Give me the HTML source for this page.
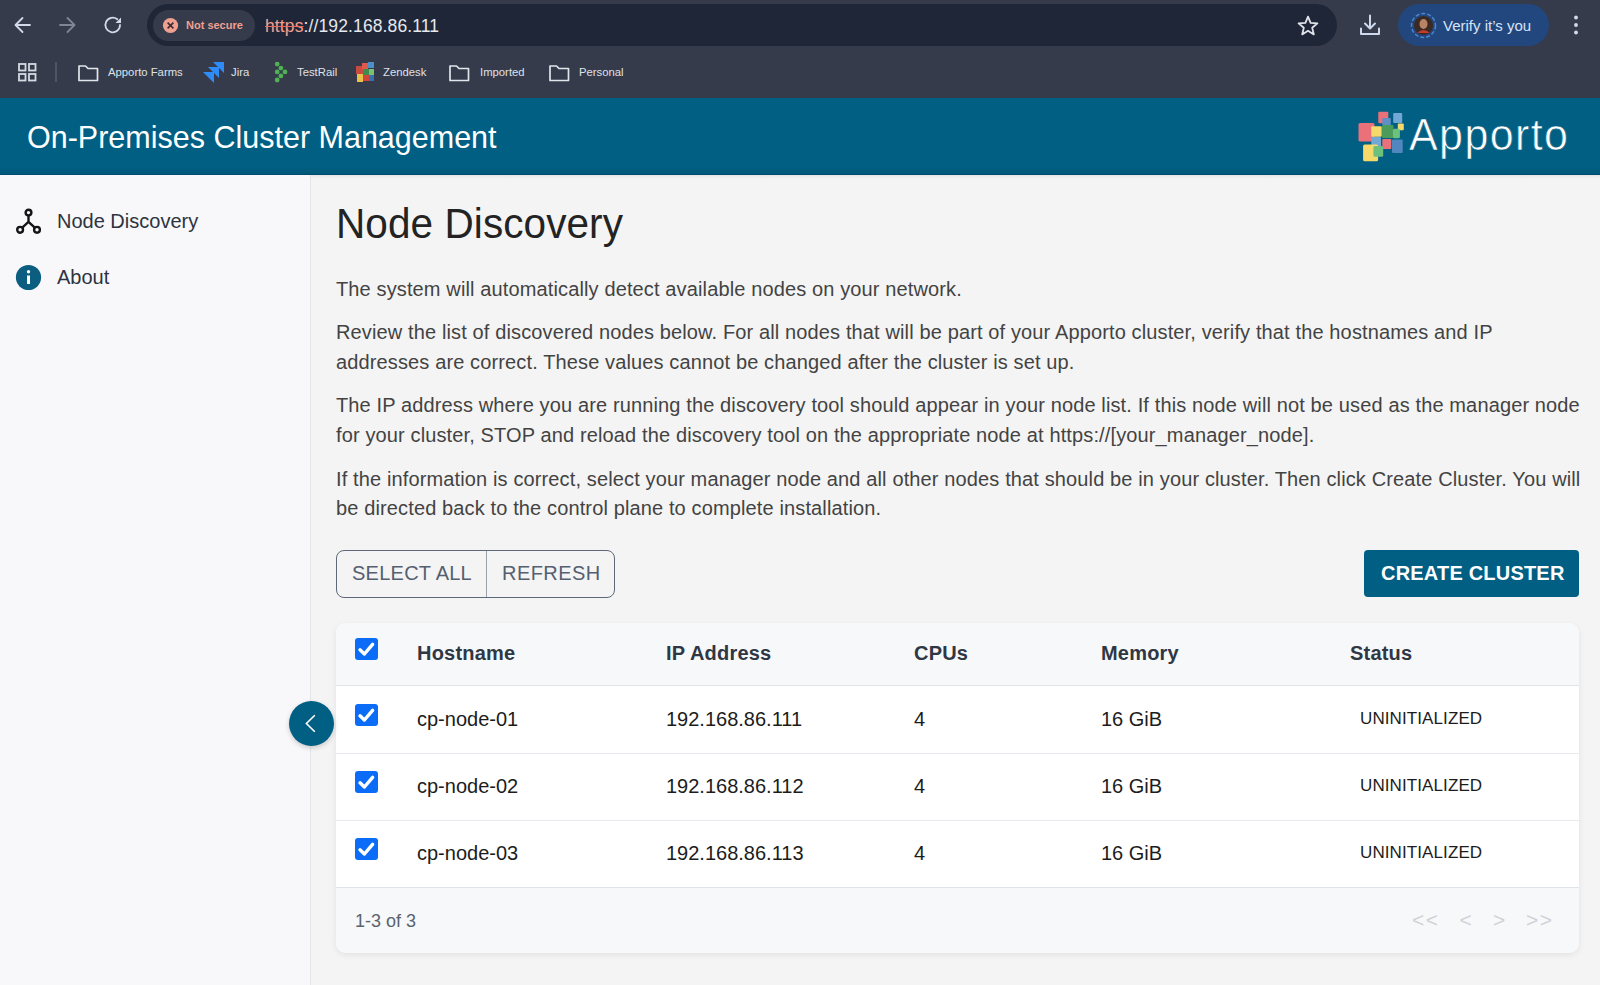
<!DOCTYPE html>
<html><head><meta charset="utf-8">
<style>
*{box-sizing:border-box;margin:0;padding:0}
html,body{width:1600px;height:985px;overflow:hidden;background:#f4f4f4;font-family:"Liberation Sans",sans-serif;position:relative}
.a{position:absolute}
.t{position:absolute;white-space:nowrap;line-height:1}
#chrome{left:0;top:0;width:1600px;height:98px;background:#353b4b}
#omni{left:147px;top:4px;width:1190px;height:42px;border-radius:21px;background:#1f2637}
#chip{left:153px;top:10px;width:102px;height:31px;border-radius:16px;background:#353b4b}
#verify{left:1398px;top:4px;width:151px;height:42px;border-radius:21px;background:#22477f}
#hdr{left:0;top:98px;width:1600px;height:77px;background:#005f83}
#side{left:0;top:175px;width:311px;height:810px;background:#f8f8fa;border-right:1px solid #e3e5ea}
.bm{position:absolute;white-space:nowrap;line-height:1;font-size:11.3px;color:#dfe2e8;top:67px}
.p{position:absolute;white-space:nowrap;line-height:1;font-size:20px;color:#434343;left:336px;letter-spacing:0.13px}
#card{left:336px;top:623px;width:1243px;height:330px;border-radius:10px;background:#fff;box-shadow:0 2px 6px rgba(0,0,0,0.075);overflow:hidden}
.th{position:absolute;white-space:nowrap;line-height:1;font-size:20px;font-weight:bold;color:#2f3744;letter-spacing:0.2px}
.td{position:absolute;white-space:nowrap;line-height:1;font-size:20px;color:#1c1c1c}
.cb{position:absolute;left:355px;width:23px;height:22px;border-radius:3px;background:#0b6cf7}
.cb svg{position:absolute;left:0;top:0}
</style></head><body>
<!-- browser chrome -->
<div id="chrome" class="a"></div>
<svg class="a" style="left:0;top:0" width="140" height="50">
  <g fill="none" stroke="#d3d9e6" stroke-width="1.8" stroke-linecap="round" stroke-linejoin="round">
    <path d="M30 25H16M22.5 18L15.5 25L22.5 32"/>
  </g>
  <g fill="none" stroke="#7d8596" stroke-width="1.8" stroke-linecap="round" stroke-linejoin="round">
    <path d="M60 25H74M67.5 18L74.5 25L67.5 32"/>
  </g>
  <g fill="none" stroke="#d3d9e6" stroke-width="1.8" stroke-linecap="round">
    <path d="M120 25A7.3 7.3 0 1 1 117.3 19.3"/>
  </g>
  <path d="M121 17.5V23H115.5Z" fill="#d3d9e6"/>
</svg>
<div id="omni" class="a"></div>
<div id="chip" class="a"></div>
<svg class="a" style="left:162px;top:17px" width="17" height="17">
  <circle cx="8.5" cy="8.5" r="7.6" fill="#f0a091"/>
  <path d="M5.6 5.6L11.4 11.4M11.4 5.6L5.6 11.4" stroke="#3a2c35" stroke-width="1.6"/>
</svg>
<div class="t" style="left:186px;top:20px;font-size:11px;font-weight:bold;color:#f0a091">Not secure</div>
<div class="t" style="left:265px;top:18px;font-size:17.5px;color:#e6e8ee;letter-spacing:0.12px"><span style="color:#f0a091;text-decoration:line-through;text-decoration-color:#e8675c">https</span>://192.168.86.111</div>
<svg class="a" style="left:1296px;top:14px" width="24" height="24">
  <path d="M12 2.6L14.6 8.9L21.4 9.4L16.2 13.8L17.8 20.4L12 16.8L6.2 20.4L7.8 13.8L2.6 9.4L9.4 8.9Z" fill="none" stroke="#e1e4ea" stroke-width="1.8" stroke-linejoin="round"/>
</svg>
<svg class="a" style="left:1358px;top:13px" width="24" height="24">
  <g fill="none" stroke="#cdd8ec" stroke-width="2" stroke-linecap="round" stroke-linejoin="round">
    <path d="M12 2.5V15M7 10.5L12 15.5L17 10.5M3 15.5V21H21V15.5"/>
  </g>
</svg>
<div id="verify" class="a"></div>
<svg class="a" style="left:1410px;top:12px" width="27" height="27">
  <circle cx="13.5" cy="13.5" r="12" fill="none" stroke="#4f86d0" stroke-width="1.5" stroke-dasharray="4 2"/>
  <circle cx="13.5" cy="13.5" r="9.5" fill="#3a2a22"/>
  <ellipse cx="13.5" cy="12" rx="4" ry="5" fill="#b98366"/>
  <path d="M7 21Q13.5 15 20 21Z" fill="#c03a2e"/>
</svg>
<div class="t" style="left:1443px;top:18px;font-size:15px;color:#d7e3f7">Verify it’s you</div>
<svg class="a" style="left:1570px;top:14px" width="12" height="24">
  <circle cx="6" cy="3.5" r="1.9" fill="#d6dbe5"/><circle cx="6" cy="11" r="1.9" fill="#d6dbe5"/><circle cx="6" cy="18.5" r="1.9" fill="#d6dbe5"/>
</svg>
<!-- bookmarks bar -->
<svg class="a" style="left:16px;top:61px" width="24" height="24">
  <g fill="none" stroke="#d6dae2" stroke-width="1.8">
    <rect x="3" y="3" width="6.5" height="6.5"/><rect x="13" y="3" width="6.5" height="6.5"/>
    <rect x="3" y="13" width="6.5" height="6.5"/><rect x="13" y="13" width="6.5" height="6.5"/>
  </g>
</svg>
<div class="a" style="left:55px;top:62px;width:2px;height:20px;background:#4d5465"></div>
<svg class="a" style="left:76px;top:62px" width="24" height="22">
  <path d="M3 4H9.5L12 6.5H21.5V18.5H3Z" fill="none" stroke="#e2e5ea" stroke-width="1.7" stroke-linejoin="round"/>
</svg>
<div class="bm" style="left:108px">Apporto Farms</div>
<svg class="a" style="left:200px;top:59px" width="27" height="27">
  <path d="M13 3H24V14L19 9Z" fill="#2f8cf6"/>
  <path d="M8 8H19V19L14 14Z" fill="#2f8cf6"/>
  <path d="M3 13H14V24L9 19Z" fill="#2f8cf6"/>
</svg>
<div class="bm" style="left:231px">Jira</div>
<svg class="a" style="left:270px;top:58px" width="20" height="28">
  <g fill="#4fb253"><circle cx="7.2" cy="6.1" r="2.4"/><circle cx="10.9" cy="10.1" r="2.4"/><circle cx="7.2" cy="13.9" r="2.4"/><circle cx="15" cy="13.9" r="2.4"/><circle cx="10.9" cy="17.9" r="2.4"/><circle cx="7.2" cy="22" r="2.4"/></g>
</svg>
<div class="bm" style="left:297px">TestRail</div>
<svg class="a" style="left:355px;top:61px" width="22" height="22">
  <rect x="1" y="5" width="7" height="8" fill="#c94a3f"/><rect x="7" y="2" width="6" height="7" fill="#e05a4c"/><rect x="13" y="1" width="6" height="6" fill="#4b90c8"/>
  <rect x="8" y="8" width="6" height="6" fill="#3d8d4c"/><rect x="14" y="8" width="5" height="6" fill="#7cc070"/><rect x="2" y="13" width="6" height="8" fill="#e9c14a"/><rect x="8" y="14" width="6" height="6" fill="#d1453b"/><rect x="14" y="14" width="5" height="6" fill="#3a6fb0"/>
</svg>
<div class="bm" style="left:383px">Zendesk</div>
<svg class="a" style="left:447px;top:62px" width="24" height="22">
  <path d="M3 4H9.5L12 6.5H21.5V18.5H3Z" fill="none" stroke="#e2e5ea" stroke-width="1.7" stroke-linejoin="round"/>
</svg>
<div class="bm" style="left:480px">Imported</div>
<svg class="a" style="left:547px;top:62px" width="24" height="22">
  <path d="M3 4H9.5L12 6.5H21.5V18.5H3Z" fill="none" stroke="#e2e5ea" stroke-width="1.7" stroke-linejoin="round"/>
</svg>
<div class="bm" style="left:579px">Personal</div>

<!-- app header -->
<div id="hdr" class="a"></div>
<div class="a" style="left:0;top:167px;width:1600px;height:7px;background:linear-gradient(#005f83,#005879)"></div>
<div class="a" style="left:0;top:174px;width:1600px;height:1px;background:#00496f"></div>
<div class="a" style="left:311px;top:175px;width:1289px;height:4px;background:linear-gradient(rgba(0,0,0,0.06),rgba(0,0,0,0))"></div>
<div class="t" style="left:27px;top:122px;font-size:30.5px;color:#fff;transform:scaleY(1.04);transform-origin:0 25px">On-Premises Cluster Management</div>
<svg class="a" style="left:1350px;top:105px" width="60" height="60">
  <g>
  <rect x="8.5" y="18" width="16" height="18.5" rx="1.5" fill="#ea717a"/>
  <rect x="28.3" y="6.7" width="10" height="11.6" rx="1" fill="#ea717a"/>
  <rect x="43.2" y="7.9" width="9" height="10" rx="1" fill="#71a8d6"/>
  <rect x="32.3" y="13.1" width="8.5" height="7.3" rx="1" fill="#5f8fc6"/>
  <rect x="47.8" y="18.6" width="6" height="6.7" rx="1" fill="#f5d96b"/>
  <rect x="21.3" y="21.3" width="10.4" height="10.4" rx="1" fill="#f5d96b"/>
  <rect x="32" y="20" width="11.5" height="12.9" rx="1" fill="#4b9b5b"/>
  <rect x="42.9" y="23.8" width="7" height="9.4" rx="1.5" fill="#6dc17e"/>
  <rect x="21.3" y="32" width="9.7" height="10" rx="1" fill="#71a8d6"/>
  <rect x="32.3" y="34.1" width="9" height="10" rx="1" fill="#ea717a"/>
  <rect x="42" y="34.4" width="10.7" height="13.7" rx="1" fill="#4f87be"/>
  <rect x="13.1" y="39.6" width="15" height="16.7" rx="1.5" fill="#f5d96b"/>
  <rect x="23.4" y="41.1" width="9.8" height="10.7" rx="1.5" fill="#6dc17e"/>
  </g>
</svg>
<div class="t" style="left:1409px;top:113.5px;font-size:43px;color:#fff;letter-spacing:1.4px;-webkit-text-stroke:0.6px #005f83;transform:scaleY(1.05);transform-origin:0 38px">Apporto</div>

<!-- sidebar -->
<div id="side" class="a"></div>
<svg class="a" style="left:14px;top:206px" width="30" height="30">
  <g fill="none" stroke="#151515" stroke-width="2.4">
    <circle cx="14.5" cy="6.6" r="2.9"/><circle cx="6.1" cy="23.8" r="2.9"/><circle cx="23" cy="23.8" r="2.9"/>
    <path d="M14.5 9.5V15.8L8.3 21.6M14.5 15.8L20.8 21.6"/>
  </g>
</svg>
<div class="t" style="left:57px;top:211px;font-size:20px;color:#2d3340">Node Discovery</div>
<svg class="a" style="left:15px;top:264px" width="27" height="27">
  <circle cx="13.5" cy="13.5" r="12.6" fill="#0b5e80"/>
  <rect x="12" y="11.5" width="3" height="8.5" fill="#fff"/>
  <circle cx="13.5" cy="7.8" r="1.7" fill="#fff"/>
</svg>
<div class="t" style="left:57px;top:267px;font-size:20px;color:#2d3340">About</div>

<!-- main -->
<div class="t" style="left:336px;top:204px;font-size:40.5px;color:#232323;letter-spacing:0.08px;transform:scaleY(1.06);transform-origin:0 33px">Node Discovery</div>
<div class="p" style="top:279px">The system will automatically detect available nodes on your network.</div>
<div class="p" style="top:322px">Review the list of discovered nodes below. For all nodes that will be part of your Apporto cluster, verify that the hostnames and IP</div>
<div class="p" style="top:352px">addresses are correct. These values cannot be changed after the cluster is set up.</div>
<div class="p" style="top:395px">The IP address where you are running the discovery tool should appear in your node list. If this node will not be used as the manager node</div>
<div class="p" style="top:425px">for your cluster, STOP and reload the discovery tool on the appropriate node at https://[your_manager_node].</div>
<div class="p" style="top:469px">If the information is correct, select your manager node and all other nodes that should be in your cluster. Then click Create Cluster. You will</div>
<div class="p" style="top:498px">be directed back to the control plane to complete installation.</div>

<!-- buttons -->
<div class="a" style="left:336px;top:550px;width:279px;height:48px;border:1px solid #5d6878;border-radius:8px"></div>
<div class="a" style="left:486px;top:551px;width:1px;height:46px;background:#9aa1aa"></div>
<div class="t" style="left:352px;top:562.5px;font-size:20px;color:#546070;letter-spacing:0.25px">SELECT ALL</div>
<div class="t" style="left:502px;top:562.5px;font-size:20px;color:#546070;letter-spacing:0.45px">REFRESH</div>
<div class="a" style="left:1364px;top:550px;width:215px;height:47px;border-radius:4px;background:#005f83"></div>
<div class="t" style="left:1381px;top:562.5px;font-size:20px;font-weight:bold;color:#fff;letter-spacing:0.2px">CREATE CLUSTER</div>

<!-- table -->
<div id="card" class="a">
  <div class="a" style="left:0;top:0;width:1243px;height:63px;background:#f7f8fa;border-bottom:1px solid #dfe4ea"></div>
  <div class="a" style="left:0;top:130px;width:1243px;height:1px;background:#e6e9ee"></div>
  <div class="a" style="left:0;top:197px;width:1243px;height:1px;background:#e6e9ee"></div>
  <div class="a" style="left:0;top:264px;width:1243px;height:66px;background:#f7f8fa;border-top:1px solid #dfe4ea"></div>
</div>
<div class="cb" style="top:638px"><svg width="23" height="22"><path d="M5 11.8L9.4 16L17.6 6.4" fill="none" stroke="#fff" stroke-width="3.4" stroke-linecap="round" stroke-linejoin="round"/></svg></div>
<div class="th" style="left:417px;top:642.5px">Hostname</div>
<div class="th" style="left:666px;top:642.5px">IP Address</div>
<div class="th" style="left:914px;top:642.5px">CPUs</div>
<div class="th" style="left:1101px;top:642.5px">Memory</div>
<div class="th" style="left:1350px;top:642.5px">Status</div>

<div class="cb" style="top:704px"><svg width="23" height="22"><path d="M5 11.8L9.4 16L17.6 6.4" fill="none" stroke="#fff" stroke-width="3.4" stroke-linecap="round" stroke-linejoin="round"/></svg></div>
<div class="td" style="left:417px;top:709px">cp-node-01</div>
<div class="td" style="left:666px;top:709px">192.168.86.111</div>
<div class="td" style="left:914px;top:709px">4</div>
<div class="td" style="left:1101px;top:709px">16 GiB</div>
<div class="td" style="left:1360px;top:710px;font-size:17px;letter-spacing:0.1px">UNINITIALIZED</div>

<div class="cb" style="top:771px"><svg width="23" height="22"><path d="M5 11.8L9.4 16L17.6 6.4" fill="none" stroke="#fff" stroke-width="3.4" stroke-linecap="round" stroke-linejoin="round"/></svg></div>
<div class="td" style="left:417px;top:776px">cp-node-02</div>
<div class="td" style="left:666px;top:776px">192.168.86.112</div>
<div class="td" style="left:914px;top:776px">4</div>
<div class="td" style="left:1101px;top:776px">16 GiB</div>
<div class="td" style="left:1360px;top:777px;font-size:17px;letter-spacing:0.1px">UNINITIALIZED</div>

<div class="cb" style="top:838px"><svg width="23" height="22"><path d="M5 11.8L9.4 16L17.6 6.4" fill="none" stroke="#fff" stroke-width="3.4" stroke-linecap="round" stroke-linejoin="round"/></svg></div>
<div class="td" style="left:417px;top:843px">cp-node-03</div>
<div class="td" style="left:666px;top:843px">192.168.86.113</div>
<div class="td" style="left:914px;top:843px">4</div>
<div class="td" style="left:1101px;top:843px">16 GiB</div>
<div class="td" style="left:1360px;top:844px;font-size:17px;letter-spacing:0.1px">UNINITIALIZED</div>

<div class="t" style="left:355px;top:911.5px;font-size:18px;color:#5a636e">1-3 of 3</div>
<div class="t" style="left:1412px;top:908.7px;font-size:21px;color:#cfd2d7;letter-spacing:1.5px">&lt;&lt;</div>
<div class="t" style="left:1459.5px;top:908.7px;font-size:21px;color:#cfd2d7">&lt;</div>
<div class="t" style="left:1493px;top:908.7px;font-size:21px;color:#cfd2d7">&gt;</div>
<div class="t" style="left:1526px;top:908.7px;font-size:21px;color:#cfd2d7;letter-spacing:1.5px">&gt;&gt;</div>

<!-- collapse button -->
<div class="a" style="left:288.5px;top:700.5px;width:45px;height:45px;border-radius:50%;background:#005f83;box-shadow:0 2px 5px rgba(0,0,0,0.18)"></div>
<svg class="a" style="left:288px;top:700px" width="46" height="46">
  <path d="M26.8 15.2L18.4 23.5L26.8 31.8" fill="none" stroke="#fff" stroke-width="1.6"/>
</svg>
</body></html>
